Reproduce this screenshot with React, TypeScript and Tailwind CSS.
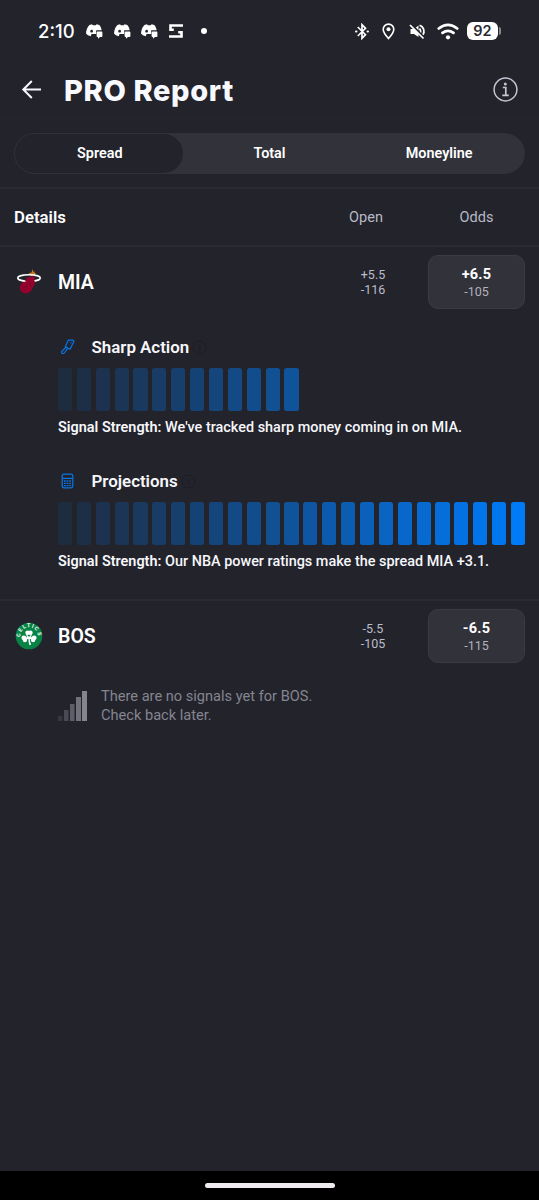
import type { ReactNode } from 'react'

const TOTAL_BARS = 25

function ChatIcon() {
  return (
    <svg width="17" height="15" viewBox="0 0 17 15" fill="#fff">
      <path fillRule="evenodd" d="M3.400 1 6 .2l.8 1h3l.8-1 2.700.8c1.500 1.700 2 3.400 2.300 5.200h-5.400v3.800H5.500l-.7 2.200-2.900-1L0 9.500C.2 6 1.300 3.200 3.400 1ZM5.600 5.700c-1.800.1-1.800 3 .1 2.900 1.800-.1 1.700-3-.1-2.900Z" />
      <path d="M11.300 7.500h4.200q.9 0 .9 1v3.600q0 1-.9 1h-1.600l-1.600 1.700-.5-1.700q-1.200 0-1.200-1V8.500Z" />
    </svg>
  )
}

function StatusBar() {
  return (
    <div className="h-[62px] flex items-center pl-[38px] text-white">
      <span className="w-[48px] whitespace-nowrap text-[18.500px] leading-none font-medium font-[Inter,sans-serif]">2:10</span>
      <div className="flex items-center gap-[10.500px] pt-px">
        <ChatIcon />
        <ChatIcon />
        <ChatIcon />
      </div>
      <svg className="ml-[11px]" width="14" height="14" viewBox="0 0 14 14" fill="none" stroke="#fff" strokeWidth="2.600">
        <path d="M14 1.500H1.500v4.300h3.300M0 12.500h12.500V8.200H9.200" />
      </svg>
      <span className="ml-[18px] w-[6px] h-[6px] rounded-full bg-white" />
      <svg className="ml-[148px]" width="14" height="17" viewBox="0 0 14 17" fill="none" stroke="#fff" strokeWidth="1.700">
        <path d="m2.800 4 7.700 7.700L7 15.300V1.700l3.500 3.600L2.800 13" />
        <path d="M1 8.500h.5M12.500 8.500h.5" strokeWidth="2" strokeLinecap="round" />
      </svg>
      <svg className="ml-[13px]" width="13" height="17" viewBox="0 0 13 17" fill="none" stroke="#fff" strokeWidth="1.600">
        <path d="M6.500 15.500C3 11.500 1.200 9 1.200 6.400a5.300 5.300 0 0 1 10.600 0c0 2.600-1.800 5.100-5.300 9.100Z" />
        <circle cx="6.500" cy="6.300" r="2" fill="#fff" stroke="none" />
      </svg>
      <svg className="ml-[14px]" width="17" height="17" viewBox="0 0 17 17" fill="none" stroke="#fff" strokeWidth="1.700">
        <path d="M1.500 6H5l4.500-3.500v11.500L5 11H1.500Z" fill="#fff" stroke="none" />
        <path d="M10.500 5.500q2 2.500.5 5M10.500 2.300c4.500 1.500 5.700 6.500 3.200 9.700" />
        <path d="m2.500 1.500 13.500 14" stroke="#22232b" strokeWidth="2" />
        <path d="m1 2 13.500 13.500" />
      </svg>
      <svg className="ml-[11px]" width="22" height="17" viewBox="0 0 22 17" fill="none" stroke="#fff" strokeWidth="2.700" strokeLinecap="round">
        <path d="M1.800 5.500q9.200-7.300 18.400 0M5.500 9.900q5.500-4.200 11 0" />
        <circle cx="11" cy="14.300" r="2.100" fill="#fff" stroke="none" />
      </svg>
      <div className="ml-[8px] w-[31px] h-[18px] rounded-[6px] bg-white text-[#292a32] flex items-center justify-center text-[14.500px] leading-none font-semibold font-[Inter,sans-serif]">
        92
      </div>
      <span className="ml-px w-[2px] h-[8px] rounded-r bg-[#85868b]" />
    </div>
  )
}

function Header() {
  return (
    <header className="h-[57px] flex items-center pl-[21px] border-b border-[#27252d]">
      <svg className="shrink-0 -mt-[2px]" width="21" height="19" viewBox="0 0 21 19" fill="none" stroke="#f8f8fc" strokeWidth="2">
        <path d="M10.800 1 2.300 9.500l8.500 8.500M2.300 9.500H20" />
      </svg>
      <h1 className="ml-[22px] w-[429px] whitespace-nowrap text-[29px] leading-none font-extrabold tracking-[0.650px] text-[#f8f8ff] font-[Inter,sans-serif] pt-px">PRO Report</h1>
      <svg className="shrink-0 -mt-px" width="25" height="25" viewBox="0 0 25 25" fill="none" stroke="#c5c5d2" strokeWidth="1.500">
        <circle cx="12.500" cy="12.500" r="11.400" />
        <path d="M9.800 10.500h3v8M9.300 18.300h6.500" strokeWidth="1.700" />
        <circle cx="12.300" cy="7" r="1.500" fill="#c5c5d2" stroke="none" />
      </svg>
    </header>
  )
}

function HeatLogo() {
  return (
    <svg width="28" height="28" viewBox="0 0 28 28" fill="none">
      <path d="M13.500 6c.5-1.500 2-1.200 3-1.500l1-3.500.8 3 1-1 .4 2 1.500.5-1.500 1.500-3 1Z" fill="#c87820" />
      <ellipse cx="14" cy="10" rx="11.300" ry="3.200" stroke="#fff" strokeWidth="1.600" />
      <path d="M12 10c3-1.800 7-1.700 8.300-.5-1 1.500-1.500 2-.5 4 .8 2.500-1.200 4.500-2.300 6.500-1.100 3.200-3.500 5.600-7.600 5.500C6.300 24.500 4 21 5 18.200 6 15.500 9 14 12 10Z" fill="#98002e" />
      <path d="M9 18c-1 2-.5 4 .5 5m3-7c-1.500 2-.5 4 0 5m3-8c-1 2.500.3 4 .2 6" stroke="#5b1028" strokeWidth=".7" />
      <path d="M3.500 11.500q4 1.700 7 1.800M20 13q3-.5 4.500-1.500" stroke="#fff" strokeWidth="1.200" />
    </svg>
  )
}

function CelticsLogo() {
  // lettering runs along the upper rim of the badge
  return (
    <svg width="28" height="28" viewBox="0 0 28 28">
      <defs>
        <path id="rim" d="M5.700 16.500a8.700 8.700 0 1 1 16.600 0" />
      </defs>
      <circle cx="14" cy="14" r="13.300" fill="#078345" />
      <text fill="#fff" fontSize="5.400" fontWeight="700" fontFamily="Roboto, sans-serif" textLength="28">
        <textPath href="#rim" startOffset="1.500">CELTICS</textPath>
      </text>
      <g fill="#fff">
        <circle cx="12.600" cy="10.800" r="2.300" />
        <circle cx="15.400" cy="10.800" r="2.300" />
        <circle cx="8.800" cy="15.800" r="2.400" />
        <circle cx="9.900" cy="18" r="2.200" />
        <circle cx="19.200" cy="15.800" r="2.400" />
        <circle cx="18.100" cy="18" r="2.200" />
        <path d="m11 11.500 3 3.500 3-3.500-1 4 3-1.500v4.500l-5-2-5 2V14l3 1.500Z" />
        <path d="M13.300 15h1.400c0 3 .4 5 1.500 7.500l-1.800.7c-.8-2.500-1.100-5-1.100-8.200Z" />
      </g>
    </svg>
  )
}

interface TeamRowProps {
  name: string
  logo: ReactNode
  open: [string, string]
  odds: [string, string]
}

function TeamRow({ name, logo, open, odds }: TeamRowProps) {
  return (
    <div className="flex items-center h-[54px] mt-[8px] pl-[15px] pr-[14px]">
      {logo}
      <span className="ml-[15px] pt-[2px] text-[19.500px] leading-none font-semibold text-white">{name}</span>
      <div className="ml-auto w-[60px] text-center text-[12.500px] leading-[15px] text-[#bdbdc9]">
        <p>{open[0]}</p>
        <p>{open[1]}</p>
      </div>
      <div className="ml-[25px] w-[97px] h-[54px] rounded-[10px] border border-[#3b3b44] bg-[#31323a] flex flex-col items-center justify-center pt-[2px]">
        <span className="text-[14.500px] leading-[18px] font-bold tracking-[0.2px] text-white">{odds[0]}</span>
        <span className="text-[12.500px] leading-[16px] text-[#b1b1bd]">{odds[1]}</span>
      </div>
    </div>
  )
}

interface SignalProps {
  title: string
  icon: ReactNode
  strength: number
  note: string
}

function Signal({ title, icon, strength, note }: SignalProps) {
  return (
    <section className="pl-[58px] pr-[14px]">
      <div className="flex items-center h-5">
        <span className="w-[33.500px]">{icon}</span>
        <h2 className="text-[16.900px] leading-5 font-semibold text-[#f7f7fb] whitespace-nowrap">{title}</h2>
        <svg className="ml-[3px]" width="15" height="15" viewBox="0 0 15 15" fill="none" stroke="#1d1e25">
          <circle cx="7.500" cy="7.500" r="6.500" />
          <path d="M6.300 6.500h1.400v4M6 10.500h3.200M7.300 4v1" />
        </svg>
      </div>
      <div className="mt-[11px] grid grid-cols-25 gap-x-[4.750px] h-[43px]">
        {Array.from({ length: strength }, (_, i) => (
          <span
            key={i}
            className="rounded-[2.500px] bg-[#007bf8]"
            style={{ opacity: 0.1 + (0.9 * i) / (TOTAL_BARS - 1) }}
          />
        ))}
      </div>
      <p className="mt-[7px] text-[14.430px] leading-[20px] whitespace-nowrap font-medium text-[#f7f7fb]">
        <span className="font-semibold">Signal Strength:</span> {note}
      </p>
    </section>
  )
}

const cleaver = (
  <svg className="ml-[2px]" width="16" height="16" viewBox="0 0 16 16" fill="none" stroke="#0877e9" strokeWidth="1.200" strokeLinejoin="round">
    <path d="M8.200 1.200 12.800 1l1.200 1.300-4 7.900-4.600-2.500ZM6 8 1.500 12.800l.4 1.500 1.900.2L8 9.200" />
    <path d="M10.900 3.500v.4" strokeLinecap="round" />
  </svg>
)

const calculator = (
  <svg className="ml-[3px]" width="13" height="16" viewBox="0 0 13 16" fill="none" stroke="#0877e9" strokeWidth="1.200">
    <rect x="1.200" y="1.200" width="10.600" height="13.600" rx="1.700" />
    <path d="M1.500 5.400h10" />
    <path d="M3 8h7M3 10.300h7M3 12.600h7" strokeWidth="1.300" strokeDasharray="1.700 .9" />
  </svg>
)

export default function App() {
  return (
    <div className="w-full h-[1200px] flex flex-col overflow-hidden bg-[#22232b] font-[Roboto,sans-serif]">
      <StatusBar />
      <Header />
      <nav className="mx-[14px] mt-[14px] h-[41px] shrink-0 grid grid-cols-3 rounded-full border border-[#31313a] bg-[#31323a] text-center text-[14.400px] leading-[39px] font-semibold text-white">
        <span className="mr-[2px] pl-[2px] rounded-full bg-[#22232b]">Spread</span>
        <span>Total</span>
        <span>Moneyline</span>
      </nav>
      <div className="mt-[13px] h-[60px] flex items-center pl-[14px] pr-[14px] pt-[2px] border-y-2 border-[#292a32] text-[14.500px] text-[#b9b9c5]">
        <span className="mr-auto text-[16.800px] font-semibold text-white">Details</span>
        <span className="w-[60px] mr-[32px] text-center">Open</span>
        <span className="w-[97px] text-center">Odds</span>
      </div>

      <TeamRow name="MIA" logo={<HeatLogo />} open={['+5.5', '-116']} odds={['+6.5', '-105']} />
      <div className="mt-[28px] flex flex-col gap-[33px]">
        <Signal title="Sharp Action" icon={cleaver} strength={13} note="We've tracked sharp money coming in on MIA." />
        <Signal title="Projections" icon={calculator} strength={25} note="Our NBA power ratings make the spread MIA +3.1." />
      </div>

      <div className="mt-[27px] border-t-2 border-[#292a32]">
        <TeamRow name="BOS" logo={<CelticsLogo />} open={['-5.5', '-105']} odds={['-6.5', '-115']} />
      </div>
      <div className="mt-[23px] pl-[58px] flex items-center text-[#858590]">
        <svg width="29" height="30" viewBox="0 0 29 30" fill="#858590">
          <rect y="25" width="4.500" height="5" opacity=".2" />
          <rect x="6" y="19" width="4.500" height="11" opacity=".4" />
          <rect x="12" y="13" width="4.500" height="17" opacity=".6" />
          <rect x="18" y="6" width="5" height="24" opacity=".8" />
          <rect x="24" width="5" height="30" />
        </svg>
        <p className="ml-[14px] pt-px text-[14.600px] leading-[19px] whitespace-nowrap">
          There are no signals yet for BOS.<br />
          Check back later.
        </p>
      </div>

      <div className="mt-auto h-[29px] shrink-0 bg-black flex justify-center pt-[12px]">
        <span className="w-[130px] h-[5px] rounded-full bg-[#eeecee]" />
      </div>
    </div>
  )
}
